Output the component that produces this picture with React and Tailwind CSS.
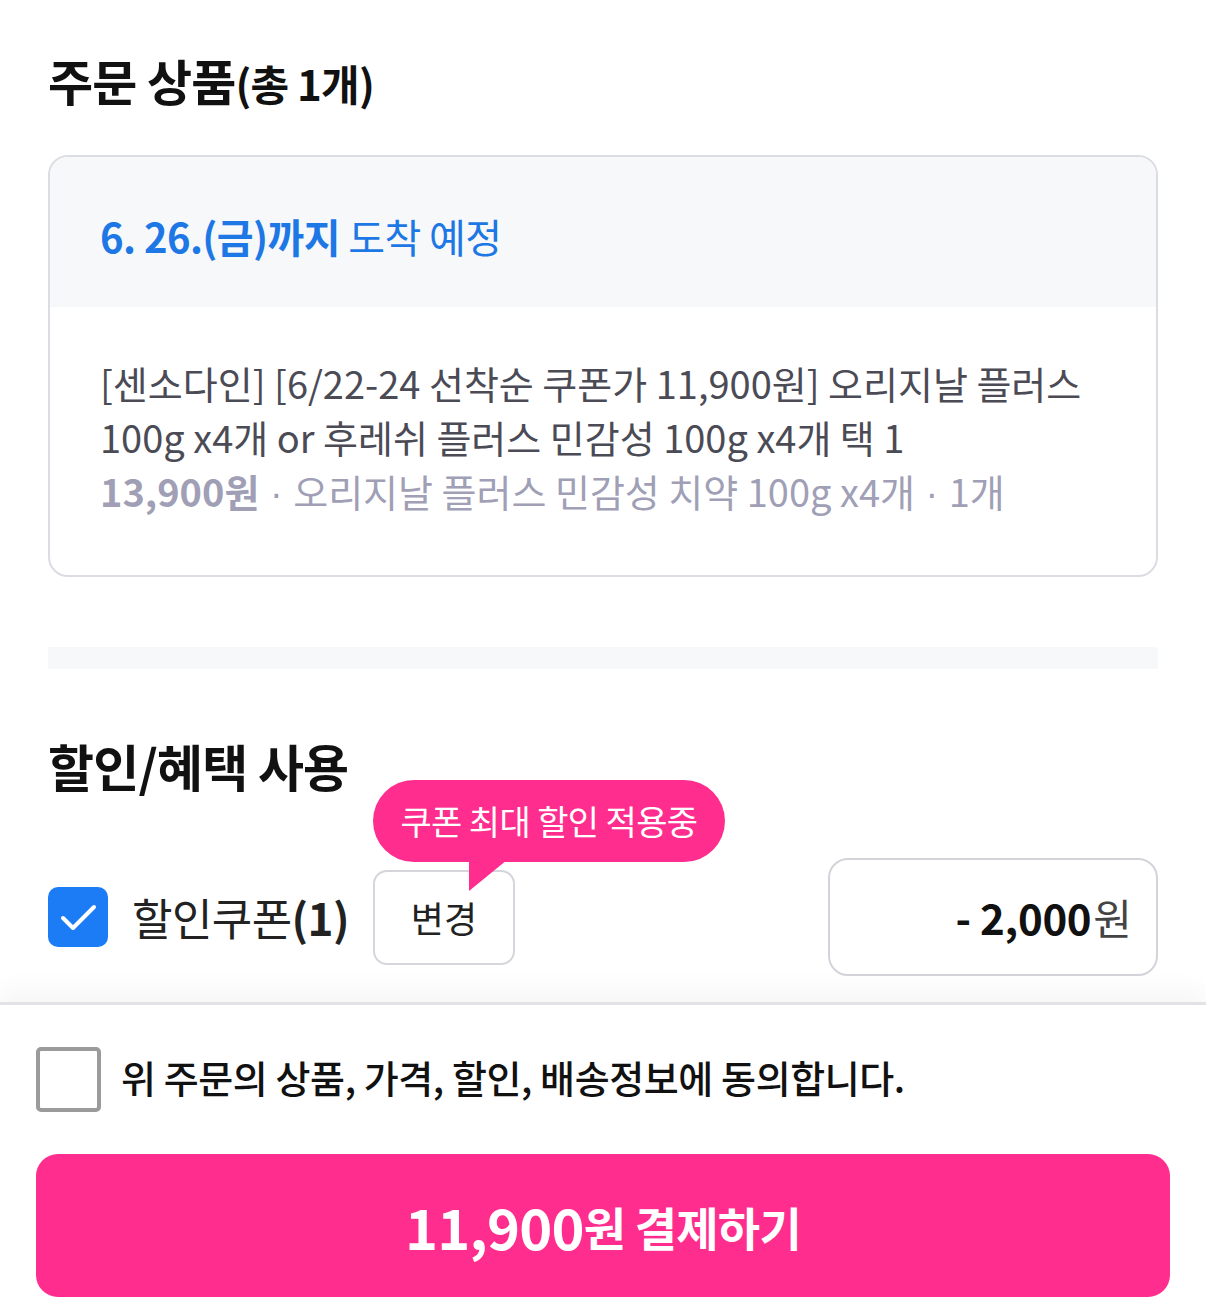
import { useState } from 'react'

function CheckIcon() {
  return (
    <svg width="60" height="60" viewBox="0 0 60 60" fill="none">
      <path d="M15 31 L25 41 L46 20" stroke="white" strokeWidth="4" strokeLinecap="round" strokeLinejoin="round" />
    </svg>
  )
}

export default function App() {
  const [agreed, setAgreed] = useState(false)

  return (
    <div className="w-full min-h-[1307px] bg-white flex flex-col font-['Noto_Sans_CJK_KR',sans-serif] text-[#111]">
      {/* 주문 상품 */}
      <section className="px-12 pt-[52px]">
        <h2 className="text-[49px] leading-[56px] font-bold tracking-[-0.8px]">
          주문 상품<span className="text-[42px] leading-none">(총 1개)</span>
        </h2>

        <div className="mt-[47px] border-2 border-[#dcdde3] rounded-[20px] overflow-hidden">
          <div className="h-[150px] bg-[#f7f8fa] flex items-center px-[50px] pt-[8px]">
            <p className="text-[40px] leading-[48px] text-[#1d77e4] tracking-[-0.6px]">
              <span className="font-bold">6. 26.(금)까지</span> 도착 예정
            </p>
          </div>
          <div className="px-[50px] pt-[49px] pb-[54px] text-[38px] leading-[54px] tracking-[0px]">
            <p className="text-[#4b4b56]">
              [센소다인] [6/22-24 선착순 쿠폰가 11,900원] 오리지날 플러스
              <br />
              100g x4개 or 후레쉬 플러스 민감성 100g x4개 택 1
            </p>
            <p className="text-[#a09fb6]">
              <span className="font-bold">13,900원</span>
              <span className="font-['Liberation_Sans',sans-serif]"> · </span>
              오리지날 플러스 민감성 치약 100g x4개
              <span className="font-['Liberation_Sans',sans-serif]"> · </span>
              1개
            </p>
          </div>
        </div>
      </section>

      <div className="mx-12 mt-[70px] h-[22px] bg-[#f7f8fa]" />

      {/* 할인/혜택 사용 */}
      <section className="px-12 mt-[68px]">
        <h2 className="text-[50px] leading-[56px] font-bold tracking-[-0.8px]">할인/혜택 사용</h2>

        <div className="mt-[65px] h-[118px] flex items-center">
          <div className="w-[60px] h-[60px] rounded-[10px] bg-[#1b7cf6] flex items-center justify-center shrink-0">
            <CheckIcon />
          </div>
          <span className="ml-[24px] text-[44px] leading-none tracking-[-0.6px] text-[#222]">
            할인쿠폰<span className="font-bold">(1)</span>
          </span>

          <div className="relative ml-[24px]">
            <div className="absolute left-0 top-[-90px] w-[352px] h-[82px] rounded-full bg-[#ff2d8d] flex items-center justify-center z-10">
              <span className="text-[34px] leading-none text-white tracking-[-0.6px]">쿠폰 최대 할인 적용중</span>
              <svg className="absolute left-[94px] top-[80px]" width="40" height="32" viewBox="0 0 40 32">
                <path d="M2 0 L40 0 L2 31 Z" fill="#ff2d8d" />
              </svg>
            </div>
            <button className="w-[142px] h-[95px] border-2 border-[#d5d6dc] rounded-[14px] bg-white text-[36px] leading-none text-[#222]">
              변경
            </button>
          </div>

          <div className="ml-auto w-[330px] h-[118px] border-2 border-[#d3d4da] rounded-[20px] flex items-center justify-end pr-[24px]">
            <span className="text-[42px] leading-none font-bold tracking-[-0.3px]">- 2,000</span>
            <span className="text-[42px] leading-none text-[#444] ml-[2px]">원</span>
          </div>
        </div>
      </section>

      {/* 하단 결제 영역 */}
      <footer className="mt-[26px] border-t-[3px] border-[#e3e3e7] shadow-[0_-14px_22px_rgba(0,0,0,0.035)] bg-white px-[36px] pt-[42px] pb-[9px]">
        <label className="flex items-center cursor-pointer">
          <input type="checkbox" className="hidden" checked={agreed} onChange={() => setAgreed(!agreed)} />
          <span className="w-[65px] h-[65px] border-[4px] border-[#9b9b9b] rounded-[5px] shrink-0" />
          <span className="ml-[20px] text-[38px] leading-none font-medium tracking-[-0.4px] -mt-[6px]">
            위 주문의 상품, 가격, 할인, 배송정보에 동의합니다.
          </span>
        </label>

        <button className="mt-[42px] w-full h-[143px] rounded-[22px] bg-[#ff2d8d] flex items-center justify-center text-white font-bold tracking-[-0.8px]">
          <span className="text-[56px] leading-none">11,900</span>
          <span className="text-[46px] leading-none">원 결제하기</span>
        </button>
      </footer>
    </div>
  )
}
